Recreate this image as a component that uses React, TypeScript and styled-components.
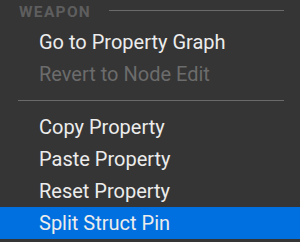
import styled, { createGlobalStyle } from "styled-components";

const GlobalStyle = createGlobalStyle`
	html, body {
		margin: 0;
		padding: 0;
		background: #353535;
	}
	* {
		box-sizing: border-box;
	}
`;

const Menu = styled.div`
	width: 300px;
	height: 242px;
	background: #353535;
	font-family: Roboto, "Liberation Sans", sans-serif;
	overflow: hidden;
	display: flex;
	flex-direction: column;
`;

const SectionHeader = styled.div`
	height: 21px;
	padding: 0 16px 0 19px;
	display: flex;
	align-items: center;
	gap: 18px;
`;

const SectionTitle = styled.span`
	margin-top: 4px;
	font-size: 15.5px;
	font-weight: 700;
	letter-spacing: 1.3px;
	color: #5e5e5e;
	line-height: 1;
`;

const HeaderLine = styled.div`
	flex: 1;
	height: 1px;
	background: #6a6a6a;
`;

const Spacer = styled.div<{ $h: number }>`
	height: ${(p) => p.$h}px;
	flex-shrink: 0;
`;

const Item = styled.div<{ $disabled?: boolean; $active?: boolean }>`
	height: 32px;
	flex-shrink: 0;
	padding-left: 39px;
	display: flex;
	align-items: center;
	font-size: 20px;
	color: ${(p) => (p.$disabled ? "#6c6c6c" : "#ececec")};
	background: ${(p) => (p.$active ? "#0070e0" : "transparent")};
`;

const Separator = styled.div`
	height: 21px;
	flex-shrink: 0;
	padding: 0 16px 0 18px;
	display: flex;
	align-items: center;

	&::after {
		content: "";
		flex: 1;
		height: 1px;
		background: #6a6a6a;
	}
`;

export default function App() {
	return (
		<>
			<GlobalStyle />
			<Menu>
				<SectionHeader>
					<SectionTitle>WEAPON</SectionTitle>
					<HeaderLine />
				</SectionHeader>
				<Spacer $h={5} />
				<Item>Go to Property Graph</Item>
				<Item $disabled>Revert to Node Edit</Item>
				<Separator />
				<Item>Copy Property</Item>
				<Item>Paste Property</Item>
				<Item>Reset Property</Item>
				<Item $active>Split Struct Pin</Item>
			</Menu>
		</>
	);
}
